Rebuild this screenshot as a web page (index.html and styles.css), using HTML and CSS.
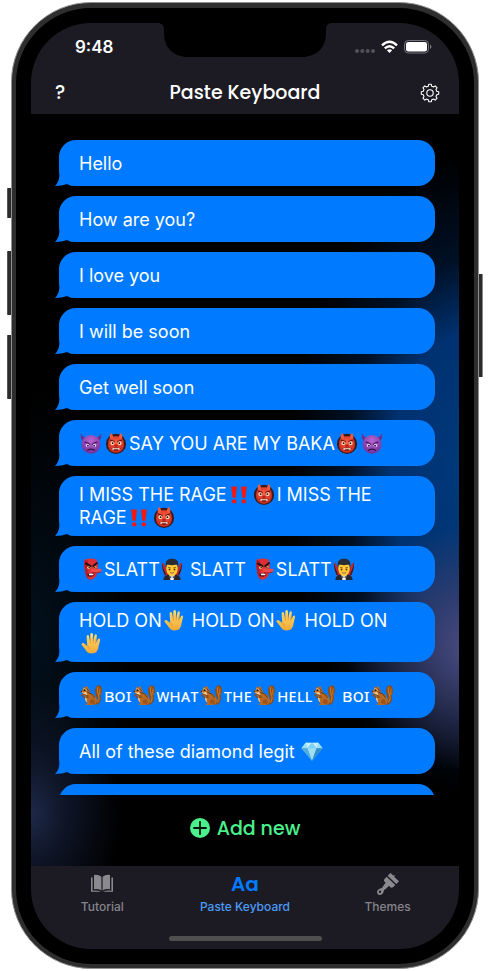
FILE: index.html
```html
<!DOCTYPE html>
<html lang="en">
<head>
<meta charset="utf-8">
<meta name="viewport" content="width=device-width, initial-scale=1">
<title>Paste Keyboard</title>
<link rel="stylesheet" href="styles.css">
</head>
<body>
<svg class="sprite" aria-hidden="true">
  <defs>
    <radialGradient id="g-imp" cx=".5" cy=".3" r=".7"><stop offset="0" stop-color="#b766cf"/><stop offset="1" stop-color="#71309a"/></radialGradient>
    <radialGradient id="g-ogre" cx=".5" cy=".4" r=".6"><stop offset="0" stop-color="#ff6049"/><stop offset="1" stop-color="#c92b1c"/></radialGradient>
    <linearGradient id="g-hand" x1="0" y1="0" x2="0" y2="1"><stop offset="0" stop-color="#ffdf72"/><stop offset="1" stop-color="#f2a834"/></linearGradient>
  </defs>
  <symbol id="imp" viewBox="0 0 24 24">
    <path d="M1 1.500C.4 6 2 10.500 5.500 11.500L10 6C6 6.500 2.500 5 1 1.500ZM23 1.500C23.600 6 22 10.500 18.500 11.500L14 6C18 6.500 21.500 5 23 1.500Z" fill="#6b2d8e"/>
    <circle cx="12" cy="13.500" r="10.300" fill="url(#g-imp)"/>
    <path d="M5.500 11Q9 11.500 10.500 13.500M18.500 11Q15 11.500 13.500 13.500" stroke="#431460" stroke-width="1.300" fill="none" stroke-linecap="round"/>
    <ellipse cx="8.300" cy="14.800" rx="1.900" ry="1.900" fill="#f3dff8"/><ellipse cx="15.700" cy="14.800" rx="1.900" ry="1.900" fill="#f3dff8"/>
    <circle cx="8.600" cy="14.900" r="1.100" fill="#35104d"/><circle cx="15.400" cy="14.900" r="1.100" fill="#35104d"/>
    <path d="M8.300 20Q12 17.300 15.700 20" stroke="#35104d" stroke-width="1.400" fill="none" stroke-linecap="round"/>
  </symbol>
  <symbol id="ogre" viewBox="0 0 24 24">
    <circle cx="12" cy="13" r="11" fill="#3b1a1c"/>
    <path d="M3.500 12C3.500 6.500 7 4.500 12 4.500S20.500 6.500 20.500 12C21.500 18 18 22.500 12 22.500S2.500 18 3.500 12Z" fill="url(#g-ogre)"/>
    <path d="M5.500 8Q4.500 3.500 6.500.8Q9.500 3.500 9 7ZM18.500 8Q19.500 3.500 17.500.8Q14.500 3.500 15 7Z" fill="#f15a3c"/>
    <path d="M5.500 8.800L10.500 10.500M18.500 8.800L13.500 10.500" stroke="#5e1413" stroke-width="1.200"/>
    <circle cx="8" cy="12.200" r="2" fill="#ffe6b8"/><circle cx="16" cy="12.200" r="2" fill="#ffe6b8"/>
    <circle cx="8.300" cy="12.200" r="1" fill="#240c0c"/><circle cx="15.700" cy="12.200" r="1" fill="#240c0c"/>
    <ellipse cx="12" cy="15" rx="2.200" ry="1.300" fill="#b8241d"/>
    <path d="M7 17.500Q12 16.300 17 17.500Q16 20.500 12 20.500T7 17.500Z" fill="#6b1011"/>
    <path d="M8 17.600H16L15.200 18.900H8.800Z" fill="#ffe9c9"/><path d="M8 19.700L8.700 17L9.600 19.300ZM16 19.700L15.300 17L14.400 19.300Z" fill="#fff"/>
  </symbol>
  <symbol id="bangs" viewBox="0 0 24 24">
    <path d="M3.500 3.800H9.800L8.300 16H5ZM14.200 3.800H20.500L19 16H15.700Z" fill="#f5180d"/>
    <circle cx="6.700" cy="20" r="2.400" fill="#f5180d"/><circle cx="17.300" cy="20" r="2.400" fill="#f5180d"/>
  </symbol>
  <symbol id="goblin" viewBox="0 0 24 24">
    <path d="M5 2Q11-.5 18 1.500Q20.500 7 19 12L18 19Q15 24 9.500 23.500Q5.500 20 5.500 14Q3.500 8 5 2Z" fill="#dc3038"/>
    <path d="M5 2Q3.500 8 5.500 14Q5.500 20 9.500 23.500Q7.500 12 9 3Z" fill="#b41f2b"/>
    <path d="M6.500 6L11.500 8.800M18.500 5.500L14.500 8.800" stroke="#271014" stroke-width="2.200" stroke-linecap="round"/>
    <ellipse cx="9.500" cy="10.500" rx="1.900" ry="1.200" fill="#f5d96b"/><ellipse cx="16.500" cy="10.200" rx="1.500" ry="1.100" fill="#f5d96b"/>
    <circle cx="10" cy="10.400" r=".8" fill="#160909"/><circle cx="16.200" cy="10.200" r=".8" fill="#160909"/>
    <path d="M8.500 17Q12 15.800 16 17.500Q14.500 21 11 20.500T8.500 17Z" fill="#4a0a11"/><path d="M9.500 17.300Q12.500 16.500 15 17.700L14 18.700H10Z" fill="#fff"/>
    <path d="M12 12Q14.500 10.500 17 12.300L22.500 11.500Q24.500 13.500 22.500 15.200Q18 17.200 13 15.800Q11 14 12 12Z" fill="#ed4a48"/>
    <path d="M13 15.800Q18 17 22.500 15.200" stroke="#9b1622" fill="none" stroke-width=".9"/>
  </symbol>
  <symbol id="vampire" viewBox="0 0 24 24">
    <path d="M1 5Q4 6 6 12H18Q20 6 23 5Q23 13 20 19H4Q1 13 1 5Z" fill="#c2262f"/>
    <path d="M1 5Q1 14 4.500 19L5.500 18Q2.300 12 1 5ZM23 5Q23 14 19.500 19L18.500 18Q21.700 12 23 5Z" fill="#242229"/>
    <path d="M2.500 24Q3 18.500 9 18H15Q21 18.500 21.500 24Z" fill="#27262e"/>
    <path d="M9 17.500H15L13.800 24H10.200Z" fill="#eef0f5"/>
    <path d="M5.800 8Q12 4 18.200 8V12.500Q17.500 19.500 12 19.500T5.800 12.500Z" fill="#ffcb33"/>
    <path d="M5.600 10.500Q3 1 12 .6Q21 1 18.400 10.500L17.500 7L12 8L6.500 7Z" fill="#2b2b33"/>
    <path d="M7.800 10.200L10.500 10.700M16.200 10.200L13.500 10.700" stroke="#6b3b08" stroke-width=".8"/>
    <circle cx="9.300" cy="12.500" r="1" fill="#5a2c08"/><circle cx="14.700" cy="12.500" r="1" fill="#5a2c08"/>
    <path d="M9.800 15.800Q12 16.600 14.200 15.800Q12 18.500 9.800 15.800Z" fill="#fff" stroke="#963018" stroke-width=".5"/>
    <path d="M12 20.800L9.500 19.500V22.300ZM12 20.800L14.500 19.500V22.300Z" fill="#44444d"/>
  </symbol>
  <symbol id="hand" viewBox="0 0 24 24">
    <path d="M7.200 4.300Q8.700 2.500 9.800 4.300L11 11L11.300 2Q12.800 0 14.100 2L14.300 11L16 3Q17.600 1.600 18.400 3.400L17.600 11.700L19.800 7.500Q21.600 6.600 22 8.400L20.300 15.500Q19.800 23.500 12.500 23.500Q8 23.500 5.800 19L1.500 13.600Q1.600 11.500 3.800 12L7.900 15.200Z" fill="url(#g-hand)"/>
    <path d="M11 6L11.400 13M14.300 6V12.500M17.700 7L16.900 13M8.500 15.200Q10 17 10.300 19" stroke="#d68c26" stroke-width=".7" fill="none"/>
  </symbol>
  <symbol id="squirrel" viewBox="0 0 24 24">
    <path d="M14 22Q20 21 18.500 15Q15 7 17.500 3Q20.500-.5 23 3Q25 8 22.500 12.500Q24 20 18.500 22.500Z" fill="#8d4c12"/>
    <path d="M19.500 3Q18 8 20.500 13Q21.500 17 19 20M22 5Q21 8 22 12" stroke="#c7772a" stroke-width="1.200" fill="none"/>
    <path d="M3 6L4.300 2.500L6 4L8 1.500L9 4.500Q11.500 7 10.500 9.500Q17 11 18.300 17Q19 22 14 23H6L8 21Q5 18 6.500 12.500L3.500 10Q.3 9.600 1.200 7.800Z" fill="#b76822"/>
    <path d="M2 9Q5 10 6.500 8.500L8 11.500Q6 15 8 20Q5 18.500 5.500 13Z" fill="#f2d09a"/>
    <path d="M8 9Q14 10 16 15M7 5L10 8" stroke="#63340f" stroke-width="1" fill="none"/>
    <path d="M8 13L3.500 11.300L2 12.500M9 14.500L3.800 14.200" stroke="#934c15" stroke-width="1.600" fill="none" stroke-linecap="round"/>
    <path d="M11 21Q10 16.500 14 16.500Q17 18 15.500 22" fill="#9c5319"/>
    <circle cx="5" cy="6.500" r="1" fill="#1d1009"/><circle cx="1.500" cy="8" r=".7" fill="#3a1c10"/>
    <path d="M3.500 5.500Q5.500 4.300 7.500 7" stroke="#fae5bd" stroke-width=".8" fill="none"/>
  </symbol>
  <symbol id="gem" viewBox="0 0 24 24">
    <path d="M5 3H19L23.500 9L12 22.500L.5 9Z" fill="#62bde9"/>
    <path d="M5 3L7 9H.5ZM19 3L17 9H23.500Z" fill="#9be0f7"/>
    <path d="M5 3H12L7 9ZM12 3H19L17 9Z" fill="#c8f1fd"/>
    <path d="M12 3L17 9H7Z" fill="#81d1f1"/>
    <path d="M7 9H17L12 22.500Z" fill="#9be0f7"/><path d="M.5 9H7L12 22.500Z" fill="#52addc"/><path d="M17 9H23.500L12 22.500Z" fill="#328fc9"/>
  </symbol>
</svg>

<div class="phone">
  <span class="key key-mute"></span>
  <span class="key key-up"></span>
  <span class="key key-down"></span>
  <span class="key key-power"></span>
  <div class="bezel">
    <div class="screen">
      <svg class="notch" viewBox="0 0 176 34" aria-hidden="true"><path d="M0 0H176C171 0 169 2 169 7V10C169 25 159 34 145 34H31C17 34 7 25 7 10V7C7 2 5 0 0 0Z"/></svg>
      <header class="top">
        <div class="status">
          <time>9:48</time>
          <div class="signals">
            <svg width="20" height="14" viewBox="0 0 20 14" fill="#51515b" aria-hidden="true"><circle cx="2" cy="11" r="2"/><circle cx="7.300" cy="11" r="2"/><circle cx="12.700" cy="11" r="2"/><circle cx="18" cy="11" r="2"/></svg>
            <svg width="17" height="14" viewBox="0 0 17 14" fill="none" stroke="#fff" stroke-width="2.400" aria-hidden="true"><path d="M1 5.300Q8.500-1.700 16 5.300"/><path d="M3.800 8.300Q8.500 4 13.200 8.300"/><path d="M8.500 13L5.800 10.300Q8.500 8 11.200 10.300Z" fill="#fff" stroke="none"/></svg>
            <svg width="28" height="14" viewBox="0 0 28 14" aria-hidden="true"><rect x=".5" y=".5" width="24" height="12.500" rx="3.800" fill="none" stroke="#74747c"/><rect x="2" y="2" width="21" height="9.500" rx="2.300" fill="#fff"/><path d="M26 4.500Q29 6.700 26 9Z" fill="#74747c"/></svg>
          </div>
        </div>
        <div class="titlebar">
          <button class="icon-button" type="button" aria-label="Help">?</button>
          <h1>Paste Keyboard</h1>
          <button class="icon-button" type="button" aria-label="Settings">
            <svg width="20" height="20" viewBox="0 0 20 20" fill="none" stroke="#fff" stroke-width="1.100" stroke-linejoin="round" aria-hidden="true"><path d="M8.300 3.300L8.700 1.300H11.300L11.700 3.300Q12.700 3.500 13.500 4L15.200 2.900L17.100 4.800L16 6.500Q16.500 7.300 16.700 8.300L18.700 8.700V11.300L16.700 11.700Q16.500 12.700 16 13.500L17.100 15.200L15.200 17.100L13.500 16Q12.700 16.500 11.700 16.700L11.300 18.700H8.700L8.300 16.700Q7.300 16.500 6.500 16L4.800 17.100L2.900 15.200L4 13.500Q3.500 12.700 3.300 11.700L1.300 11.300V8.700L3.300 8.300Q3.500 7.300 4 6.500L2.900 4.800L4.800 2.900L6.500 4Q7.300 3.500 8.300 3.300Z"/><circle cx="10" cy="10" r="3.200"/></svg>
          </button>
        </div>
      </header>

      <main class="content">
        <ul class="phrases">
          <li><button class="bubble" type="button">Hello</button></li>
          <li><button class="bubble" type="button">How are you?</button></li>
          <li><button class="bubble" type="button">I love you</button></li>
          <li><button class="bubble" type="button">I will be soon</button></li>
          <li><button class="bubble" type="button">Get well soon</button></li>
          <li><button class="bubble" type="button"><svg class="emoji"><use href="#imp"/></svg><svg class="emoji"><use href="#ogre"/></svg>SAY YOU ARE MY BAKA<svg class="emoji"><use href="#ogre"/></svg><svg class="emoji"><use href="#imp"/></svg></button></li>
          <li><button class="bubble" type="button">I MISS THE RAGE<svg class="emoji"><use href="#bangs"/></svg><svg class="emoji"><use href="#ogre"/></svg>I MISS THE RAGE<svg class="emoji"><use href="#bangs"/></svg><svg class="emoji"><use href="#ogre"/></svg></button></li>
          <li><button class="bubble" type="button"><svg class="emoji"><use href="#goblin"/></svg>SLATT<svg class="emoji"><use href="#vampire"/></svg> SLATT <svg class="emoji"><use href="#goblin"/></svg>SLATT<svg class="emoji"><use href="#vampire"/></svg></button></li>
          <li><button class="bubble" type="button">HOLD ON<svg class="emoji"><use href="#hand"/></svg> HOLD ON<svg class="emoji"><use href="#hand"/></svg> HOLD ON<svg class="emoji"><use href="#hand"/></svg></button></li>
          <li><button class="bubble smallcaps" type="button"><svg class="emoji"><use href="#squirrel"/></svg>ʙᴏɪ<svg class="emoji"><use href="#squirrel"/></svg>ᴡʜᴀᴛ<svg class="emoji"><use href="#squirrel"/></svg>ᴛʜᴇ<svg class="emoji"><use href="#squirrel"/></svg>ʜᴇʟʟ<svg class="emoji"><use href="#squirrel"/></svg> ʙᴏɪ<svg class="emoji"><use href="#squirrel"/></svg></button></li>
          <li><button class="bubble" type="button">All of these diamond legit <svg class="emoji"><use href="#gem"/></svg></button></li>
          <li><button class="bubble" type="button" aria-label="More"></button></li>
        </ul>
        <button class="add" type="button">
          <svg width="20" height="20" viewBox="0 0 20 20" aria-hidden="true"><circle cx="10" cy="10" r="10" fill="#4bef8c"/><path d="M10 4V16M4 10H16" stroke="#06150c" stroke-width="1.800" stroke-linecap="round"/></svg>
          Add new
        </button>
      </main>

      <footer class="bottom">
        <nav class="tabs">
          <a href="#tutorial">
            <svg width="24" height="24" viewBox="0 0 24 24" fill="#8a8a8e" aria-hidden="true"><path d="M11.400 4.800Q8 2 4 2.900V17.300Q8 16.500 11.400 18.500ZM12.600 4.800Q16 2 20 2.900V17.300Q16 16.500 12.600 18.500Z"/><path d="M1 5.500H2.600V18.700Q7 17.800 11 19.800H1ZM23 5.500H21.400V18.700Q17 17.800 13 19.800H23Z"/></svg>
            Tutorial
          </a>
          <a class="active" href="#keyboard" aria-current="page"><span class="glyph">Aa</span>Paste Keyboard</a>
          <a href="#themes">
            <svg width="24" height="24" viewBox="0 0 24 24" fill="#8a8a8e" aria-hidden="true"><path d="M14.600 1L17.200 3.600L18.800 2.900L18.300 4.900L23 9.300L20.300 12L11.600 3.800Z"/><path d="M10.600 4.800L19.300 13L17 15.300Q15.700 16.300 14.500 15.200L13 13.800L11 15.700Q9.800 17 8 18Q7.300 22.900 4 22.900Q.8 22.500 1.100 19.400Q1.800 16.700 6 16Q7 14 8.300 12.500L9.700 10.800L8.400 9.500Q7.400 8.400 8.300 7.200ZM4 18.600A1.200 1.200 0 1 0 5.200 19.800A1.200 1.200 0 0 0 4 18.600Z" fill-rule="evenodd"/></svg>
            Themes
          </a>
        </nav>
        <span class="home"></span>
      </footer>
    </div>
  </div>
</div>
</body>
</html>
```
FILE: styles.css
```css
* { box-sizing: border-box; }

body {
  margin: 0;
  background: #fff;
  color: #fff;
  font-family: Inter, "Liberation Sans", sans-serif;
}

button {
  margin: 0;
  padding: 0;
  border: 0;
  background: none;
  color: inherit;
  font: inherit;
  cursor: pointer;
}

.sprite { position: absolute; width: 0; height: 0; }

/* Device frame */
.phone {
  position: relative;
  display: flex;
  height: calc(100vh - 4px);
  min-height: 600px;
  margin: 2px 11px;
  padding: 5px 4px 4px;
  border: 1px solid #92918f;
  border-radius: 80px;
  background: #2e2e2e;
}

.key {
  position: absolute;
  left: -5px;
  width: 4px;
  border-left: 1px solid #555;
  border-radius: 1px 0 0 1px;
  background: #2b2b2b;
}
.key-mute { top: 185px; height: 30px; }
.key-up { top: 248px; height: 64px; }
.key-down { top: 332px; height: 64px; }
.key-power {
  top: 271px;
  right: -5px;
  left: auto;
  height: 103px;
  border-right: 1px solid #888;
  border-left: 0;
  border-radius: 0 1px 1px 0;
}

.bezel {
  display: flex;
  flex: 1;
  min-width: 0;
  padding: 15px;
  border-radius: 75px;
  background: #000;
}

.screen {
  position: relative;
  display: flex;
  flex: 1;
  flex-direction: column;
  min-width: 0;
  overflow: hidden;
  border-radius: 60px;
  background: #000;
}

.notch {
  position: absolute;
  top: 0;
  left: 50%;
  width: 176px;
  height: 34px;
  transform: translateX(-50%);
}

/* Header */
.top { background: #1c1b24; }

.status {
  display: flex;
  align-items: center;
  justify-content: space-between;
  height: 48px;
  padding: 0 27px 0 44px;
}
.status time { font-size: 17px; font-weight: 600; }
.signals { display: flex; gap: 6px; }

.titlebar {
  display: flex;
  align-items: center;
  justify-content: space-between;
  height: 43px;
  padding: 0 19px;
}
.titlebar h1 {
  margin: 0;
  font-size: 19px;
  font-weight: 500;
  line-height: 28px;
}
.titlebar h1, .icon-button, .add, .glyph {
  font-family: Poppins, Inter, sans-serif;
  font-feature-settings: "cv11";
}
.icon-button {
  display: flex;
  align-items: center;
  justify-content: center;
  width: 20px;
  height: 28px;
  font-size: 19px;
  font-weight: 500;
  line-height: 28px;
}

/* Phrase list */
.content {
  display: flex;
  flex: 1;
  flex-direction: column;
  min-height: 0;
  background:
    radial-gradient(ellipse 90px 130px at 0 93%, #1e2848 0%, rgba(19, 27, 50, .7) 40%, transparent 100%),
    radial-gradient(ellipse 130px 125px at 104% 71%, #4d4d83 0%, rgba(62, 64, 110, .7) 45%, transparent 100%),
    radial-gradient(ellipse 190px 320px at 104% 48%, #003a7d 0%, #003170 45%, rgba(0, 32, 74, .5) 68%, transparent 100%),
    radial-gradient(ellipse 100px 250px at 0 70%, #02101d, transparent),
    #000;
}

.phrases {
  display: flex;
  flex: 1;
  flex-direction: column;
  gap: 10px;
  min-height: 0;
  margin: 0;
  padding: 26px 24px 0;
  overflow-y: auto;
  list-style: none;
  scrollbar-width: none;
}
.phrases li { display: flex; flex-shrink: 0; padding-left: 4px; }

.bubble {
  position: relative;
  flex: 1;
  min-height: 46px;
  padding: 7px 26px 7px 20px;
  border-radius: 17px;
  background: #007aff;
  font-size: 18px;
  line-height: 23px;
  text-align: left;
}
.bubble::before {
  content: "";
  position: absolute;
  bottom: 0;
  left: -4px;
  width: 18px;
  height: 16px;
  background: #007aff;
  clip-path: path("M4 0C5 7 4 12 0 16C5 16 9 15 12 14C14 15 16 16 18 16V0Z");
}
.smallcaps { font-family: "Noto Sans", "DejaVu Sans", sans-serif; }

.emoji {
  width: 22px;
  height: 22px;
  margin: 0 2px 0 1px;
  vertical-align: -4px;
}

.add {
  display: flex;
  align-items: center;
  justify-content: center;
  gap: 7px;
  height: 71px;
  padding-bottom: 5px;
  color: #4bef8c;
  font-size: 19px;
  font-weight: 500;
}

/* Tab bar */
.bottom {
  display: flex;
  flex-direction: column;
  align-items: center;
  justify-content: space-between;
  height: 83px;
  padding: 6px 0 8px;
  background: #1c1b24;
}
.tabs {
  display: grid;
  grid-template-columns: repeat(3, 1fr);
  width: 100%;
}
.tabs a {
  display: flex;
  flex-direction: column;
  align-items: center;
  gap: 3px;
  color: #858589;
  font-size: 12px;
  font-weight: 500;
  line-height: 16px;
  text-decoration: none;
}
.tabs .active { color: #4b9bf8; }
.glyph {
  color: #007aff;
  font-size: 20px;
  font-weight: 600;
  line-height: 24px;
}
.home {
  width: 153px;
  height: 5px;
  border-radius: 3px;
  background: #504f50;
}
```
